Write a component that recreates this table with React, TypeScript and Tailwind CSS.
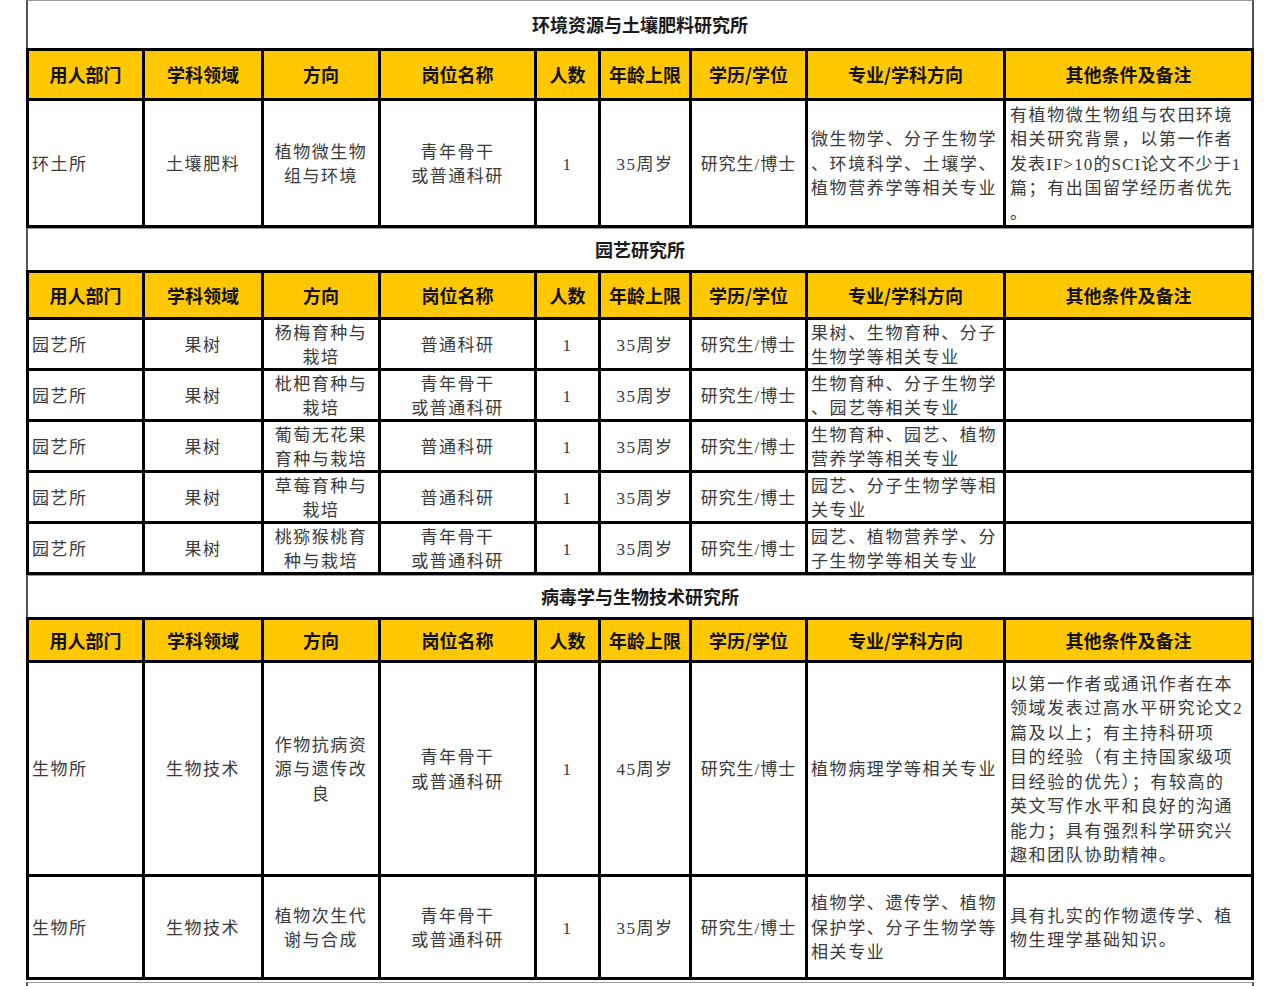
import React from "react";

type Row = {
  dept: string;
  field: string;
  dir: string[];
  post: string[];
  num: string;
  age: string;
  edu: string;
  major: string[];
  note: string[];
  h: string;
};

const cols = "grid grid-cols-[113px_116px_114px_153px_61px_88px_113px_195px_245px] gap-[3px]";

const cell =
  "flex bg-white pt-[4px] text-[17px] leading-[24.5px] tracking-[1.5px] text-[#3a3a3a] font-['Liberation_Serif','Noto_Sans_CJK_SC',serif]";

const headFont = "font-['Noto_Sans_CJK_SC',sans-serif]";

const headers = ["用人部门", "学科领域", "方向", "岗位名称", "人数", "年龄上限", "学历/学位", "专业/学科方向", "其他条件及备注"];

function Lines({ lines }: { lines: string[] }) {
  return (
    <>
      {lines.map((l, i) => (
        <div key={i} className={/[A-Z]/.test(l) ? "whitespace-nowrap tracking-[1.1px]" : "whitespace-nowrap"}>
          {l}
        </div>
      ))}
    </>
  );
}

function Title({ text, h }: { text: string; h: string }) {
  return (
    <div
      className={`${h} ${headFont} flex items-center justify-center border-x-2 border-t border-x-[#555] border-t-[#9a9a9a] bg-white text-[18px] font-bold text-[#1a1a1a]`}
    >
      {text}
    </div>
  );
}

function Section({ title, titleH, headH, rows }: { title: string; titleH: string; headH: string; rows: Row[] }) {
  return (
    <div>
      <Title text={title} h={titleH} />
      <div className={`${cols} bg-black p-[3px]`}>
        {headers.map((t) => (
          <div
            key={t}
            className={`${headH} ${headFont} flex items-center justify-center bg-[#ffc800] text-[18px] font-bold text-[#111]`}
          >
            {t}
          </div>
        ))}
        {rows.map((r, i) => (
          <React.Fragment key={i}>
            <div className={`${r.h} ${cell} items-center px-[3px]`}>{r.dept}</div>
            <div className={`${r.h} ${cell} items-center justify-center`}>{r.field}</div>
            <div className={`${r.h} ${cell} flex-col items-center justify-center text-center`}>
              <Lines lines={r.dir} />
            </div>
            <div className={`${r.h} ${cell} flex-col items-center justify-center text-center`}>
              <Lines lines={r.post} />
            </div>
            <div className={`${r.h} ${cell} items-center justify-center`}>{r.num}</div>
            <div className={`${r.h} ${cell} items-center justify-center`}>{r.age}</div>
            <div className={`${r.h} ${cell} items-center justify-center whitespace-nowrap tracking-[1px]`}>{r.edu}</div>
            <div className={`${r.h} ${cell} flex-col justify-center px-[3px] tracking-[1.6px]`}>
              <Lines lines={r.major} />
            </div>
            <div className={`${r.h} ${cell} flex-col justify-center pl-[4px] tracking-[1.6px]`}>
              <Lines lines={r.note} />
            </div>
          </React.Fragment>
        ))}
      </div>
    </div>
  );
}

const s1: Row[] = [
  {
    dept: "环土所",
    field: "土壤肥料",
    dir: ["植物微生物", "组与环境"],
    post: ["青年骨干", "或普通科研"],
    num: "1",
    age: "35周岁",
    edu: "研究生/博士",
    major: ["微生物学、分子生物学", "、环境科学、土壤学、", "植物营养学等相关专业"],
    note: ["有植物微生物组与农田环境", "相关研究背景，以第一作者", "发表IF>10的SCI论文不少于1", "篇；有出国留学经历者优先", "。"],
    h: "h-[124px]",
  },
];

const s2: Row[] = [
  { dept: "园艺所", field: "果树", dir: ["杨梅育种与", "栽培"], post: ["普通科研"], num: "1", age: "35周岁", edu: "研究生/博士", major: ["果树、生物育种、分子", "生物学等相关专业"], note: [], h: "h-[48px]" },
  { dept: "园艺所", field: "果树", dir: ["枇杷育种与", "栽培"], post: ["青年骨干", "或普通科研"], num: "1", age: "35周岁", edu: "研究生/博士", major: ["生物育种、分子生物学", "、园艺等相关专业"], note: [], h: "h-[48px]" },
  { dept: "园艺所", field: "果树", dir: ["葡萄无花果", "育种与栽培"], post: ["普通科研"], num: "1", age: "35周岁", edu: "研究生/博士", major: ["生物育种、园艺、植物", "营养学等相关专业"], note: [], h: "h-[48px]" },
  { dept: "园艺所", field: "果树", dir: ["草莓育种与", "栽培"], post: ["普通科研"], num: "1", age: "35周岁", edu: "研究生/博士", major: ["园艺、分子生物学等相", "关专业"], note: [], h: "h-[48px]" },
  { dept: "园艺所", field: "果树", dir: ["桃猕猴桃育", "种与栽培"], post: ["青年骨干", "或普通科研"], num: "1", age: "35周岁", edu: "研究生/博士", major: ["园艺、植物营养学、分", "子生物学等相关专业"], note: [], h: "h-[48px]" },
];

const s3: Row[] = [
  {
    dept: "生物所",
    field: "生物技术",
    dir: ["作物抗病资", "源与遗传改", "良"],
    post: ["青年骨干", "或普通科研"],
    num: "1",
    age: "45周岁",
    edu: "研究生/博士",
    major: ["植物病理学等相关专业"],
    note: [
      "以第一作者或通讯作者在本",
      "领域发表过高水平研究论文2",
      "篇及以上；有主持科研项",
      "目的经验（有主持国家级项",
      "目经验的优先）；有较高的",
      "英文写作水平和良好的沟通",
      "能力；具有强烈科学研究兴",
      "趣和团队协助精神。",
    ],
    h: "h-[211px]",
  },
  {
    dept: "生物所",
    field: "生物技术",
    dir: ["植物次生代", "谢与合成"],
    post: ["青年骨干", "或普通科研"],
    num: "1",
    age: "35周岁",
    edu: "研究生/博士",
    major: ["植物学、遗传学、植物", "保护学、分子生物学等", "相关专业"],
    note: ["具有扎实的作物遗传学、植", "物生理学基础知识。"],
    h: "h-[100px]",
  },
];

export default function App() {
  return (
    <div className="h-[986px] w-[1280px] overflow-hidden bg-white">
      <div className="ml-[26px] w-[1228px]">
        <Section title="环境资源与土壤肥料研究所" titleH="h-[48px]" headH="h-[47px]" rows={s1} />
        <Section title="园艺研究所" titleH="h-[42px]" headH="h-[44px]" rows={s2} />
        <Section title="病毒学与生物技术研究所" titleH="h-[42px]" headH="h-[40px]" rows={s3} />
        <div className="mt-[2px] h-[40px] border-x-2 border-t border-x-[#555] border-t-[#9a9a9a] bg-white" />
      </div>
    </div>
  );
}
